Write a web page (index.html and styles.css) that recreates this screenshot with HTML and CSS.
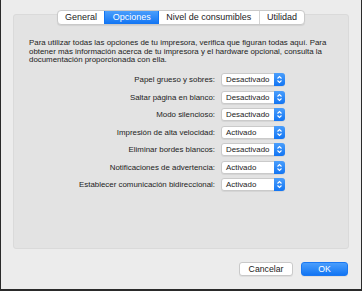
FILE: index.html
```html
<!DOCTYPE html>
<html>
<head>
    <meta charset="UTF-8">
    <title>Opciones de impresora</title>
    <link rel="stylesheet" href="styles.css">
</head>
<body>
    <div class="window">
        <div class="tabs">
            <span class="tab">General</span>
            <span class="tab active">Opciones</span>
            <span class="tab">Nivel de consumibles</span>
            <span class="tab">Utilidad</span>
        </div>
        <div class="panel">
            <p class="intro">Para utilizar todas las opciones de tu impresora, verifica que figuran todas aquí. Para obtener más información acerca de tu impresora y el hardware opcional, consulta la documentación proporcionada con ella.</p>
            <div class="options">
                <label>Papel grueso y sobres:</label>
                <div class="select"><span class="value">Desactivado</span><span class="stepper"><svg width="7" height="9" viewBox="0 0 7 9"><path d="M1.5 3.5 L3.5 1.5 L5.5 3.5 M1.5 5.5 L3.5 7.5 L5.5 5.5" fill="none" stroke="#fff" stroke-width="1.1"/></svg></span></div>

                <label>Saltar página en blanco:</label>
                <div class="select"><span class="value">Desactivado</span><span class="stepper"><svg width="7" height="9" viewBox="0 0 7 9"><path d="M1.5 3.5 L3.5 1.5 L5.5 3.5 M1.5 5.5 L3.5 7.5 L5.5 5.5" fill="none" stroke="#fff" stroke-width="1.1"/></svg></span></div>

                <label>Modo silencioso:</label>
                <div class="select"><span class="value">Desactivado</span><span class="stepper"><svg width="7" height="9" viewBox="0 0 7 9"><path d="M1.5 3.5 L3.5 1.5 L5.5 3.5 M1.5 5.5 L3.5 7.5 L5.5 5.5" fill="none" stroke="#fff" stroke-width="1.1"/></svg></span></div>

                <label>Impresión de alta velocidad:</label>
                <div class="select"><span class="value">Activado</span><span class="stepper"><svg width="7" height="9" viewBox="0 0 7 9"><path d="M1.5 3.5 L3.5 1.5 L5.5 3.5 M1.5 5.5 L3.5 7.5 L5.5 5.5" fill="none" stroke="#fff" stroke-width="1.1"/></svg></span></div>

                <label>Eliminar bordes blancos:</label>
                <div class="select"><span class="value">Desactivado</span><span class="stepper"><svg width="7" height="9" viewBox="0 0 7 9"><path d="M1.5 3.5 L3.5 1.5 L5.5 3.5 M1.5 5.5 L3.5 7.5 L5.5 5.5" fill="none" stroke="#fff" stroke-width="1.1"/></svg></span></div>

                <label>Notificaciones de advertencia:</label>
                <div class="select"><span class="value">Activado</span><span class="stepper"><svg width="7" height="9" viewBox="0 0 7 9"><path d="M1.5 3.5 L3.5 1.5 L5.5 3.5 M1.5 5.5 L3.5 7.5 L5.5 5.5" fill="none" stroke="#fff" stroke-width="1.1"/></svg></span></div>

                <label>Establecer comunicación bidireccional:</label>
                <div class="select"><span class="value">Activado</span><span class="stepper"><svg width="7" height="9" viewBox="0 0 7 9"><path d="M1.5 3.5 L3.5 1.5 L5.5 3.5 M1.5 5.5 L3.5 7.5 L5.5 5.5" fill="none" stroke="#fff" stroke-width="1.1"/></svg></span></div>
            </div>
        </div>
        <div class="buttons">
            <button class="btn">Cancelar</button>
            <button class="btn primary">OK</button>
        </div>
    </div>
</body>
</html>
```

FILE: styles.css
```css
body {
    margin: 0;
    padding: 0;
    font-family: "Liberation Sans", Arial, sans-serif;
    font-size: 9px;
    color: #222;
}

.window {
    box-sizing: border-box;
    width: 362px;
    height: 291px;
    background-color: #ececec;
    border-left: 1px solid #2a2a2a;
    border-right: 1px solid #2a2a2a;
    border-bottom: 2px solid #2a2a2a;
    padding: 10px 12px 0 12px;
    display: flex;
    flex-direction: column;
}

/* segmented tab control */
.tabs {
    align-self: center;
    display: flex;
    height: 15px;
    background-color: #fff;
    border: 1px solid #c9c9c9;
    border-radius: 4px;
    box-shadow: 0 1px 1px rgba(0, 0, 0, 0.08);
    box-sizing: border-box;
    position: relative;
    z-index: 1;
    overflow: hidden;
}

.tab {
    display: flex;
    align-items: center;
    padding: 0 7.3px;
    border-left: 1px solid #d4d4d4;
    color: #222;
    line-height: 13px;
}

.tab:first-child {
    border-left: none;
}

.tab.active {
    background: linear-gradient(#4a9efc, #1275f3);
    color: #fff;
    border-left-color: #1275f3;
}

.tab.active + .tab {
    border-left-color: #1275f3;
}

.panel {
    margin-top: -11px;
    height: 235px;
    box-sizing: border-box;
    background-color: #e3e3e3;
    border: 1px solid #dadada;
    border-radius: 3px;
    padding: 24px 14px 0 15px;
}

.intro {
    margin: 0;
    line-height: 8.7px;
    font-size: 7.9px;
}

.options {
    margin-top: 8px;
    display: grid;
    grid-template-columns: 186px 64px;
    column-gap: 6px;
    row-gap: 4.5px;
    align-items: center;
    font-size: 7.9px;
}

.options label {
    text-align: right;
    white-space: nowrap;
}

.select {
    display: flex;
    height: 13px;
    box-sizing: border-box;
    background-color: #fff;
    border: 1px solid #cacaca;
    border-radius: 3px;
    box-shadow: 0 1px 0 rgba(0, 0, 0, 0.06);
}

.select .value {
    flex: 1;
    padding-left: 4px;
    line-height: 11px;
}

.stepper {
    width: 11px;
    margin: -1px -1px -1px 0;
    border-radius: 0 3px 3px 0;
    background: linear-gradient(#4a9efc, #1275f3);
    display: flex;
    align-items: center;
    justify-content: center;
}

.buttons {
    margin-top: 13px;
    display: flex;
    justify-content: flex-end;
    gap: 8px;
    padding-right: 1px;
}

.btn {
    height: 14px;
    box-sizing: border-box;
    padding: 0;
    font-family: "Liberation Sans", Arial, sans-serif;
    font-size: 8.7px;
    color: #222;
    background-color: #fff;
    border: 1px solid #c9c9c9;
    border-radius: 3px;
    box-shadow: 0 1px 0 rgba(0, 0, 0, 0.06);
    width: 54px;
}

.btn.primary {
    width: 47px;
    color: #fff;
    border-color: #1a78f2;
    background: linear-gradient(#4a9efc, #1275f3);
}
```
